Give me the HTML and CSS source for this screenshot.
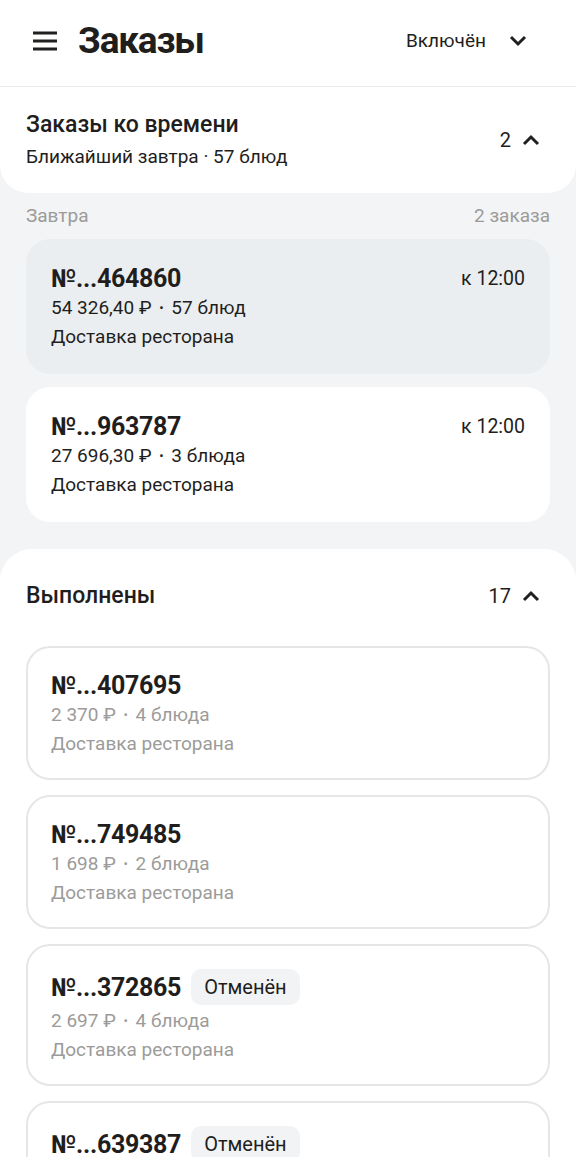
FILE: index.html
```html
<!DOCTYPE html>
<html lang="ru">
<head>
    <meta charset="UTF-8">
    <meta name="viewport" content="width=device-width, initial-scale=1.0">
    <title>Заказы</title>
    <link rel="stylesheet" href="styles.css">
</head>
<body>
    <header class="topbar">
        <div class="topbar-left">
            <svg class="burger" width="24" height="20" viewBox="0 0 24 20">
                <path d="M0 2h24M0 10h24M0 18h24" stroke="#21201f" stroke-width="3"/>
            </svg>
            <h1>Заказы</h1>
        </div>
        <div class="status">
            <span>Включён</span>
            <svg width="18" height="12" viewBox="0 0 18 12">
                <path d="M2 2l7 7 7-7" fill="none" stroke="#21201f" stroke-width="3"/>
            </svg>
        </div>
    </header>

    <section class="scheduled">
        <div class="scheduled-text">
            <div class="section-title">Заказы ко времени</div>
            <div class="section-sub">Ближайший завтра · 57 блюд</div>
        </div>
        <div class="counter">
            <span>2</span>
            <svg width="18" height="12" viewBox="0 0 18 12">
                <path d="M2 10l7-7 7 7" fill="none" stroke="#21201f" stroke-width="3"/>
            </svg>
        </div>
    </section>

    <div class="day-row">
        <span>Завтра</span>
        <span>2 заказа</span>
    </div>

    <div class="list">
        <div class="order order-active">
            <div class="order-head">
                <span class="order-num">№...464860</span>
                <span class="order-time">к 12:00</span>
            </div>
            <div class="order-line">54 326,40 ₽ <span class="dot">•</span> 57 блюд</div>
            <div class="order-line">Доставка ресторана</div>
        </div>
        <div class="order">
            <div class="order-head">
                <span class="order-num">№...963787</span>
                <span class="order-time">к 12:00</span>
            </div>
            <div class="order-line">27 696,30 ₽ <span class="dot">•</span> 3 блюда</div>
            <div class="order-line">Доставка ресторана</div>
        </div>
    </div>

    <section class="done">
        <div class="done-head">
            <div class="section-title">Выполнены</div>
            <div class="counter">
                <span>17</span>
                <svg width="18" height="12" viewBox="0 0 18 12">
                    <path d="M2 10l7-7 7 7" fill="none" stroke="#21201f" stroke-width="3"/>
                </svg>
            </div>
        </div>

        <div class="done-list">
            <div class="order order-done">
                <div class="order-head">
                    <span class="order-num">№...407695</span>
                </div>
                <div class="order-line">2 370 ₽ <span class="dot">•</span> 4 блюда</div>
                <div class="order-line">Доставка ресторана</div>
            </div>
            <div class="order order-done">
                <div class="order-head">
                    <span class="order-num">№...749485</span>
                </div>
                <div class="order-line">1 698 ₽ <span class="dot">•</span> 2 блюда</div>
                <div class="order-line">Доставка ресторана</div>
            </div>
            <div class="order order-done">
                <div class="order-head order-head-tall">
                    <span class="order-num">№...372865</span>
                    <span class="badge">Отменён</span>
                </div>
                <div class="order-line">2 697 ₽ <span class="dot">•</span> 4 блюда</div>
                <div class="order-line">Доставка ресторана</div>
            </div>
            <div class="order order-done">
                <div class="order-head order-head-tall">
                    <span class="order-num">№...639387</span>
                    <span class="badge">Отменён</span>
                </div>
                <div class="order-line">1 450 ₽ <span class="dot">•</span> 2 блюда</div>
                <div class="order-line">Доставка ресторана</div>
            </div>
        </div>
    </section>
</body>
</html>
```

FILE: styles.css
```css
body {
    margin: 0;
    font-family: Roboto, "Noto Sans", sans-serif;
    color: #1f1e1d;
    background-color: #f3f4f6;
}

.topbar {
    display: flex;
    justify-content: space-between;
    align-items: center;
    height: 81px;
    padding: 0 33px 5px;
    background: white;
    border-bottom: 1px solid #e9e9e9;
}

.topbar-left {
    display: flex;
    align-items: center;
    gap: 21px;
}

h1 {
    margin: 0;
    font-size: 37px;
    font-weight: 700;
    letter-spacing: -1.2px;
}

.status {
    display: flex;
    align-items: center;
    gap: 23px;
    font-size: 19px;
    margin-right: 16px;
}

.scheduled {
    display: flex;
    justify-content: space-between;
    align-items: center;
    padding: 24px 36px 24px 26px;
    background: white;
    border-radius: 0 0 28px 28px;
}

.section-title {
    font-size: 23px;
    line-height: 28px;
    font-weight: 500;
}

.section-sub {
    font-size: 19px;
    line-height: 24px;
    margin-top: 6px;
}

.counter {
    display: flex;
    align-items: center;
    gap: 11px;
    font-size: 20px;
}

.day-row {
    display: flex;
    justify-content: space-between;
    padding: 0 26px;
    margin-top: 12px;
    font-size: 19px;
    line-height: 22px;
    color: #9c9b99;
}

.list {
    display: flex;
    flex-direction: column;
    gap: 13px;
    padding: 12px 26px 0;
}

.order {
    background: white;
    border-radius: 24px;
    padding: 24px 25px 23px;
}

.order-active {
    background: #ebeef0;
}

.order-head {
    display: flex;
    align-items: center;
    justify-content: space-between;
    height: 30px;
}

.order-num {
    font-size: 25px;
    font-weight: 700;
    letter-spacing: -0.3px;
}

.order-time {
    font-size: 19.5px;
}

.order-line {
    font-size: 19px;
    line-height: 29px;
}

.dot {
    font-size: 13px;
    vertical-align: 2px;
    margin: 0 3px;
}

.done {
    margin-top: 27px;
    padding: 33px 26px 0;
    background: white;
    border-radius: 32px 32px 0 0;
}

.done-head {
    display: flex;
    justify-content: space-between;
    align-items: center;
    padding-right: 10px;
}

.done-head .section-title {
    font-size: 23px;
}

.done-list {
    display: flex;
    flex-direction: column;
    gap: 15px;
    margin-top: 36px;
}

.order-done {
    border: 2px solid #e6e6e6;
    padding: 22px 23px 20px;
}

.order-done .order-head {
    justify-content: flex-start;
    gap: 10px;
}

.order-done .order-head-tall {
    height: 38px;
}

.order-done .order-line {
    color: #9c9b99;
}

.badge {
    background: #f2f3f5;
    border-radius: 10px;
    padding: 0 13px;
    font-size: 20px;
    line-height: 36px;
}
```
